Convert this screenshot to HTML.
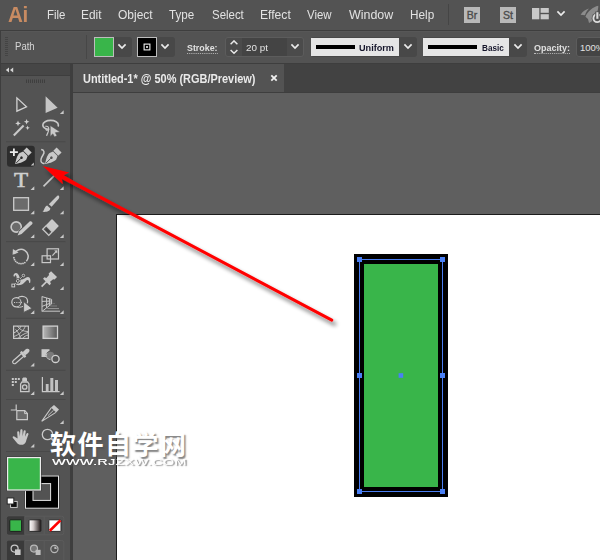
<!DOCTYPE html>
<html><head><meta charset="utf-8">
<style>
html,body{margin:0;padding:0;}
body{width:600px;height:560px;overflow:hidden;background:#3e3e3e;position:relative;font-family:"Liberation Sans","Noto Sans CJK SC",sans-serif;}
.abs{position:absolute;}
#menubar{left:0;top:0;width:600px;height:29.6px;background:#535353;}
#menubar span.m{position:absolute;top:8px;font-size:12.5px;color:#e2e2e2;line-height:15px;white-space:nowrap;transform:scaleX(0.915);transform-origin:0 50%;}
#ctrl{left:1px;top:31px;width:599px;height:32px;background:#535353;box-shadow:0 1px 0 #575757 inset;}
#ctrl .t{position:absolute;font-size:11px;line-height:13px;white-space:nowrap;transform:scaleX(0.91);transform-origin:0 50%;}
#tabbar{left:73px;top:64px;width:527px;height:28px;background:#424242;}
#tab{left:73px;top:64px;width:211px;height:28px;background:#535353;}
#canvas{left:73px;top:93px;width:527px;height:467px;background:#5f5f5f;}
#toolhead{left:1px;top:64px;width:69px;height:11px;background:#464646;}
#tools{left:1px;top:76px;width:69px;height:484px;background:#535353;}
#artb{left:116px;top:214px;width:484px;height:346px;background:#1c1c1c;}
#artw{left:117px;top:215px;width:483px;height:345px;background:#fff;}
.dd{position:absolute;background:#474747;border-radius:0 3px 3px 0;}
</style></head><body>
<div id="menubar" class="abs">
<span class="abs" style="left:8px;top:3px;font-size:21.5px;line-height:24px;color:#c88b62;font-weight:bold;letter-spacing:-0.5px;transform:scaleX(0.96);transform-origin:0 50%;">Ai</span>
<span class="m" style="left:47px">File</span>
<span class="m" style="left:81px;transform:scaleX(0.95)">Edit</span>
<span class="m" style="left:118px;transform:scaleX(0.96)">Object</span>
<span class="m" style="left:169px;transform:scaleX(0.93)">Type</span>
<span class="m" style="left:212px">Select</span>
<span class="m" style="left:260px;transform:scaleX(0.97)">Effect</span>
<span class="m" style="left:307px">View</span>
<span class="m" style="left:349px;transform:scaleX(0.995)">Window</span>
<span class="m" style="left:410px;transform:scaleX(0.94)">Help</span>
<div class="abs" style="left:448px;top:4px;width:1px;height:21px;background:#454545;"></div>
<div class="abs" style="left:464px;top:7px;width:16px;height:16px;background:#b9b9b9;"></div>
<span class="abs" style="left:464px;top:8px;width:16px;text-align:center;font-size:10.5px;line-height:14px;color:#4c4c4c;-webkit-text-stroke:0.35px #4c4c4c;">Br</span>
<div class="abs" style="left:500px;top:7px;width:16px;height:16px;background:#b9b9b9;"></div>
<span class="abs" style="left:500px;top:8px;width:16px;text-align:center;font-size:10.5px;line-height:14px;color:#4c4c4c;-webkit-text-stroke:0.35px #4c4c4c;">St</span>
<svg class="abs" style="left:532px;top:8px" width="17" height="12" viewBox="0 0 17 12"><rect x="0" y="0" width="7.3" height="11.3" fill="#c9c9c9"/><rect x="8.6" y="0" width="8.2" height="4.8" fill="#c9c9c9"/><rect x="8.6" y="6.2" width="8.2" height="5.1" fill="#c9c9c9"/></svg>
<svg class="abs" style="left:556px;top:10px" width="10" height="7" viewBox="0 0 10 7"><path d="M1.4 1.4 L5 5 L8.6 1.4" fill="none" stroke="#ebebeb" stroke-width="1.7"/></svg>
<svg class="abs" style="left:578px;top:2px" width="22" height="24" viewBox="578 2 22 24"><path d="M598.3 5.8 C593 7 587.5 11.5 585.4 16.8 L588 19 L589 23 L591.5 21.5 C596 17 598.3 11 598.3 5.8 Z" fill="#8c8c8c"/><path d="M589 8.6 C585.5 9.4 582.5 11.8 580.6 14.8 L585 15.2 C585.8 12.8 587.2 10.4 589 8.6 Z" fill="#8c8c8c"/><circle cx="597.3" cy="18.2" r="5.6" fill="#535353"/><circle cx="597.3" cy="18.2" r="3.9" fill="none" stroke="#dcdcdc" stroke-width="1.9"/><rect x="595.2" y="11.5" width="4.2" height="7.6" fill="#535353"/><rect x="596.3" y="12.2" width="2.1" height="6.6" fill="#dcdcdc"/></svg>
</div>
<div id="ctrl" class="abs">
<!-- grip -->
<div class="abs" style="left:4px;top:6px;width:3px;height:19px;background:repeating-linear-gradient(to bottom,#444 0,#444 1px,#535353 1px,#535353 2px);"></div>
<span class="t" style="left:14px;top:8.8px;color:#d6d6d6;font-size:10.3px;transform:scaleX(0.93);">Path</span>
<div class="abs" style="left:85px;top:4px;width:1px;height:24px;background:#474747;"></div>
<!-- fill -->
<div class="abs" style="left:93px;top:6px;width:38px;height:20px;background:#484848;border-radius:3px;"></div>
<div class="abs" style="left:93px;top:6px;width:18px;height:18px;background:#39b54a;border:1px solid #bdbdbd;"></div>
<svg class="abs" style="left:116px;top:12px" width="10" height="7" viewBox="0 0 10 7"><path d="M1.4 1.4 L5 5 L8.6 1.4" fill="none" stroke="#ebebeb" stroke-width="1.7"/></svg>
<!-- stroke -->
<div class="abs" style="left:136px;top:6px;width:38px;height:20px;background:#484848;border-radius:3px;"></div>
<div class="abs" style="left:136px;top:6px;width:18px;height:18px;background:#000;border:1px solid #bdbdbd;"></div>
<svg class="abs" style="left:142px;top:12px" width="8" height="8" viewBox="0 0 8 8"><rect x="1.1" y="1.1" width="5.8" height="5.8" fill="none" stroke="#f0f0f0" stroke-width="1.1"/><rect x="3.1" y="3.1" width="1.8" height="1.8" fill="#f0f0f0"/></svg>
<svg class="abs" style="left:159px;top:12px" width="10" height="7" viewBox="0 0 10 7"><path d="M1.4 1.4 L5 5 L8.6 1.4" fill="none" stroke="#ebebeb" stroke-width="1.7"/></svg>
<span class="t" style="left:186px;top:10.7px;color:#e0e0e0;font-weight:bold;border-bottom:1px dotted #bbb;font-size:9.5px;transform:scaleX(0.932);line-height:11.5px;">Stroke:</span>
<!-- stepper group -->
<div class="abs" style="left:224px;top:6px;width:79px;height:20px;background:#4b4b4b;border-radius:3px;box-shadow:0 0 0 1px #5c5c5c inset;"></div>
<div class="abs" style="left:241px;top:7px;width:45px;height:18px;background:#444;"></div>
<svg class="abs" style="left:228px;top:9px" width="10" height="15" viewBox="0 0 10 15"><path d="M1.6 4.2 L5 0.9 L8.4 4.2 M1.6 10 L5 13.3 L8.4 10" fill="none" stroke="#e8e8e8" stroke-width="1.5"/></svg>
<span class="t" style="left:245px;top:9.9px;color:#e2e2e2;font-size:9.5px;transform:scaleX(1.040);">20 pt</span>
<svg class="abs" style="left:289px;top:12px" width="10" height="7" viewBox="0 0 10 7"><path d="M1.4 1.4 L5 5 L8.6 1.4" fill="none" stroke="#ebebeb" stroke-width="1.7"/></svg>
<!-- uniform -->
<div class="abs" style="left:310px;top:6px;width:106px;height:20px;background:#484848;border-radius:3px;"></div>
<div class="abs" style="left:310px;top:7px;width:88px;height:18px;background:#e6e6e6;"></div>
<div class="abs" style="left:315px;top:14.4px;width:39px;height:3.3px;background:#000;"></div>
<span class="t" style="left:358px;top:9.9px;color:#15152a;font-weight:bold;font-size:9.5px;transform:scaleX(0.960);">Uniform</span>
<svg class="abs" style="left:402px;top:12px" width="10" height="7" viewBox="0 0 10 7"><path d="M1.4 1.4 L5 5 L8.6 1.4" fill="none" stroke="#ebebeb" stroke-width="1.7"/></svg>
<!-- basic -->
<div class="abs" style="left:422px;top:6px;width:104px;height:20px;background:#484848;border-radius:3px;"></div>
<div class="abs" style="left:422px;top:7px;width:86px;height:18px;background:#e6e6e6;"></div>
<div class="abs" style="left:427px;top:14.4px;width:49px;height:3.3px;background:#000;"></div>
<span class="t" style="left:481px;top:9.9px;color:#15152a;font-weight:bold;font-size:9.5px;transform:scaleX(0.857);">Basic</span>
<svg class="abs" style="left:512px;top:12px" width="10" height="7" viewBox="0 0 10 7"><path d="M1.4 1.4 L5 5 L8.6 1.4" fill="none" stroke="#ebebeb" stroke-width="1.7"/></svg>
<span class="t" style="left:533px;top:10.7px;color:#e0e0e0;font-weight:bold;border-bottom:1px dotted #bbb;font-size:9.5px;transform:scaleX(0.947);line-height:11.5px;">Opacity:</span>
<div class="abs" style="left:575px;top:6px;width:30px;height:20px;background:#444;border-radius:3px;box-shadow:0 0 0 1px #5c5c5c inset;"></div>
<span class="t" style="left:579px;top:9.9px;color:#e2e2e2;;font-size:9.5px;transform:scaleX(1.0);">100%</span>
</div>
<div id="tabbar" class="abs"></div>
<div id="tab" class="abs"><span class="abs" style="left:10px;top:7.6px;font-size:12px;line-height:14px;font-weight:bold;color:#eaeaea;white-space:nowrap;transform-origin:0 50%;transform:scaleX(0.912);" id="tabt">Untitled-1* @ 50% (RGB/Preview)</span>
<svg class="abs" style="left:197.3px;top:10px" width="8" height="8" viewBox="0 0 8 8"><path d="M1.3 1.3 L6.7 6.7 M6.7 1.3 L1.3 6.7" stroke="#f0f0f0" stroke-width="1.8" fill="none"/></svg></div>
<div id="canvas" class="abs"></div>
<div id="toolhead" class="abs"></div>
<div id="tools" class="abs"></div>
<svg class="abs" id="toolsvg" style="left:0;top:0" width="72" height="560" viewBox="0 0 72 560">
<defs>
<linearGradient id="gr1" x1="0" x2="1" y1="0" y2="0"><stop offset="0" stop-color="#b8b8b8"/><stop offset="1" stop-color="#585858"/></linearGradient>
<linearGradient id="gr2" x1="0" x2="1" y1="0" y2="0"><stop offset="0" stop-color="#ffffff"/><stop offset="0.35" stop-color="#d8d0d0"/><stop offset="1" stop-color="#1a1212"/></linearGradient>
</defs>
<!-- header chevrons -->
<path d="M5.8 70 L9 67.5 L9 72.5 Z M10 70 L13.2 67.5 L13.2 72.5 Z" fill="#d4d4d4"/>
<!-- grip -->
<g fill="#3f3f3f"><rect x="26" y="79.5" width="1" height="3.5"/><rect x="28" y="79.5" width="1" height="3.5"/><rect x="30" y="79.5" width="1" height="3.5"/><rect x="32" y="79.5" width="1" height="3.5"/><rect x="34" y="79.5" width="1" height="3.5"/><rect x="36" y="79.5" width="1" height="3.5"/><rect x="38" y="79.5" width="1" height="3.5"/><rect x="40" y="79.5" width="1" height="3.5"/><rect x="42" y="79.5" width="1" height="3.5"/><rect x="44" y="79.5" width="1" height="3.5"/></g>
<!-- separators -->
<g fill="#494949"><rect x="6" y="141.3" width="59.5" height="1"/><rect x="6" y="241.1" width="59.5" height="1"/><rect x="6" y="317.8" width="59.5" height="1"/><rect x="6" y="369.8" width="59.5" height="1"/><rect x="6" y="399" width="59.5" height="1"/><rect x="6" y="451" width="59.5" height="1"/></g>
<!-- corner triangles -->
<path transform="translate(60.2 110.6)" d="M3.5 -0.4 L3.5 3.4 L-0.3 3.4 Z" fill="#c9c9c9"/>
<path transform="translate(30.8 186.6)" d="M3.5 -0.4 L3.5 3.4 L-0.3 3.4 Z" fill="#c9c9c9"/><path transform="translate(60.2 186.6)" d="M3.5 -0.4 L3.5 3.4 L-0.3 3.4 Z" fill="#c9c9c9"/>
<path transform="translate(30.8 210.8)" d="M3.5 -0.4 L3.5 3.4 L-0.3 3.4 Z" fill="#c9c9c9"/><path transform="translate(60.2 210.8)" d="M3.5 -0.4 L3.5 3.4 L-0.3 3.4 Z" fill="#c9c9c9"/>
<path transform="translate(30.8 234.6)" d="M3.5 -0.4 L3.5 3.4 L-0.3 3.4 Z" fill="#c9c9c9"/><path transform="translate(60.2 234.6)" d="M3.5 -0.4 L3.5 3.4 L-0.3 3.4 Z" fill="#c9c9c9"/>
<path transform="translate(30.8 262.6)" d="M3.5 -0.4 L3.5 3.4 L-0.3 3.4 Z" fill="#c9c9c9"/><path transform="translate(60.2 262.6)" d="M3.5 -0.4 L3.5 3.4 L-0.3 3.4 Z" fill="#c9c9c9"/>
<path transform="translate(30.8 286.6)" d="M3.5 -0.4 L3.5 3.4 L-0.3 3.4 Z" fill="#c9c9c9"/><path transform="translate(60.2 286.6)" d="M3.5 -0.4 L3.5 3.4 L-0.3 3.4 Z" fill="#c9c9c9"/>
<path transform="translate(30.8 310.6)" d="M3.5 -0.4 L3.5 3.4 L-0.3 3.4 Z" fill="#c9c9c9"/><path transform="translate(60.2 310.6)" d="M3.5 -0.4 L3.5 3.4 L-0.3 3.4 Z" fill="#c9c9c9"/>
<path transform="translate(30.8 363.2)" d="M3.5 -0.4 L3.5 3.4 L-0.3 3.4 Z" fill="#c9c9c9"/>
<path transform="translate(30.8 391.6)" d="M3.5 -0.4 L3.5 3.4 L-0.3 3.4 Z" fill="#c9c9c9"/><path transform="translate(60.2 391.6)" d="M3.5 -0.4 L3.5 3.4 L-0.3 3.4 Z" fill="#c9c9c9"/>
<path transform="translate(60.2 420.6)" d="M3.5 -0.4 L3.5 3.4 L-0.3 3.4 Z" fill="#c9c9c9"/>
<path transform="translate(30.8 444.2)" d="M3.5 -0.4 L3.5 3.4 L-0.3 3.4 Z" fill="#c9c9c9"/>
<!-- row1: selection / direct selection -->
<path d="M16.9 97.9 L16.9 111.2 L26.5 106.9 Z" fill="none" stroke="#d2d2d2" stroke-width="1.3" stroke-linejoin="miter"/>
<path d="M45.6 96.2 L45.6 113 L57.6 107.7 Z" fill="#c6c6c6"/>
<!-- row2: magic wand / lasso -->
<path d="M13.8 135.4 L23.6 125.6" stroke="#c9c9c9" stroke-width="2.1" fill="none"/>
<g fill="#d0d0d0"><path transform="translate(18 123.4)" d="M0 -2.8 L0.8 -0.8 L2.8 0 L0.8 0.8 L0 2.8 L-0.8 0.8 L-2.8 0 L-0.8 -0.8 Z"/><path transform="translate(26.6 121.8)" d="M0 -2.8 L0.8 -0.8 L2.8 0 L0.8 0.8 L0 2.8 L-0.8 0.8 L-2.8 0 L-0.8 -0.8 Z"/><path transform="translate(27.6 127.8) scale(0.8)" d="M0 -2.8 L0.8 -0.8 L2.8 0 L0.8 0.8 L0 2.8 L-0.8 0.8 L-2.8 0 L-0.8 -0.8 Z"/></g>
<path d="M49.5 129.5 C45.5 129 42.8 127.2 42.8 125 C42.8 122.3 46.3 120.4 50.6 120.4 C55 120.4 58.4 122.3 58.4 125 C58.4 125.6 58.2 126.2 57.9 126.6" fill="none" stroke="#c9c9c9" stroke-width="1.6"/>
<path d="M45.4 126.4 C47.6 125.8 49.4 127.4 48.4 129.2 C47.6 130.6 45.8 130.4 46 129 M48.4 129.2 C49.2 131.4 47.2 133.4 46.6 135.8" fill="none" stroke="#c9c9c9" stroke-width="1.2"/>
<path d="M50.2 125.4 L50.2 136.4 L52.8 133.9 L54.5 137 L57 135.7 L55.4 132.7 L60.2 132 Z" fill="#c9c9c9" stroke="#535353" stroke-width="0.6"/>
<!-- row3: pen+ (selected) / curvature -->
<rect x="7" y="145.7" width="27.8" height="21" rx="3" fill="#2d2d2d"/>
<path d="M9.9 152.1 H17.9 M13.9 148.4 V155.9" stroke="#ececec" stroke-width="1.8" fill="none"/>
<g transform="translate(15.2 164) rotate(-45)" fill="#c9c9c9"><path d="M0 0 C2.6 -1.8 7 -4.9 11 -4.7 L14.4 -3.2 L14.4 3.2 L11 4.7 C7 4.9 2.6 1.8 0 0 Z"/><rect x="15.1" y="-3.5" width="4.7" height="7"/><path d="M1.5 0 H8" stroke="#2d2d2d" stroke-width="0.9"/><circle cx="8.9" cy="0" r="1.3" fill="#2d2d2d"/></g>
<path d="M31 163 L34 163 L34 160 Z" fill="#c9c9c9" transform="translate(-0.2 2.6)"/>
<g transform="translate(45.1 164) rotate(-45)" fill="#c9c9c9"><path d="M0 0 C2.6 -1.8 7 -4.9 11 -4.7 L14.4 -3.2 L14.4 3.2 L11 4.7 C7 4.9 2.6 1.8 0 0 Z"/><rect x="15.1" y="-3.5" width="4.7" height="7"/><path d="M1.5 0 H8" stroke="#535353" stroke-width="0.9"/><circle cx="8.9" cy="0" r="1.3" fill="#535353"/></g>
<path d="M41.2 149.6 C44.5 150 44.6 152.6 43 155 C41.2 157.8 40 160.6 41.6 162.4 C42.4 163.4 43.6 163.6 44.6 163.2" fill="none" stroke="#c9c9c9" stroke-width="1.5"/>
<!-- row4: type / line -->
<text x="21" y="187" font-family="Liberation Serif, serif" font-size="20.5" fill="#cfcfcf" stroke="#cfcfcf" stroke-width="0.55" text-anchor="middle" transform="translate(21 0) scale(1.13 1) translate(-21 0)">T</text>
<path d="M43.5 186.4 L57 172.9" stroke="#c9c9c9" stroke-width="1.6" fill="none"/>
<!-- row5: rect / brush -->
<rect x="13.7" y="197.7" width="14.8" height="12.6" fill="#6b6b6b" stroke="#cbcbcb" stroke-width="1.3"/>
<path d="M58.6 195.5 C59.7 196.5 59.3 198 58.5 199 L51.6 206.8 L48.8 204.2 L56.5 196.5 C57.1 195.9 58 195.1 58.6 195.5 Z" fill="#c9c9c9"/>
<path d="M47.2 205.6 L50.4 208.6 C50 211.6 46 212.2 42.4 211.8 C44.6 210.6 44.2 206.8 47.2 205.6 Z" fill="#c9c9c9"/>

<!-- row6: shaper / eraser -->
<circle cx="16.2" cy="227" r="5.1" fill="#6b6b6b" stroke="#c9c9c9" stroke-width="1.6"/>
<path d="M17.4 235.6 L18.6 230.8 L29.4 220.6 L33 224.2 L22.2 234.6 Z" fill="#535353"/>
<path d="M17.6 235.4 L19.2 231.4 L29.6 221.6 C30.4 220.9 31.4 221.2 32 221.9 C32.6 222.6 32.8 223.5 32 224.3 L21.6 233.9 Z" fill="#c9c9c9"/>
<g transform="translate(52 219) rotate(45)"><rect x="0" y="0" width="9.9" height="8.8" rx="0.8" fill="#c9c9c9"/><rect x="0.65" y="8.8" width="8.6" height="5" fill="#535353" stroke="#c9c9c9" stroke-width="1.3"/><rect x="2.6" y="10.5" width="4.7" height="1.7" fill="#404040"/></g>
<!-- row7: rotate / scale -->
<path d="M14.23 254.04 A7.2 7.2 0 1 1 26.35 261.32" fill="none" stroke="#c9c9c9" stroke-width="1.5"/><g fill="#c9c9c9"><circle cx="24.82" cy="262.61" r="0.9"/><circle cx="22.98" cy="263.42" r="0.9"/><circle cx="21.00" cy="263.70" r="0.9"/><circle cx="19.02" cy="263.42" r="0.9"/><circle cx="17.18" cy="262.61" r="0.9"/><circle cx="15.65" cy="261.32" r="0.9"/><circle cx="14.53" cy="259.66" r="0.9"/><circle cx="13.91" cy="257.75" r="0.9"/></g><path d="M12.6 254.8 L12.9 248.9 L18.6 252.4 Z" fill="#c9c9c9"/>
<rect x="47.1" y="248.8" width="11.4" height="10.2" fill="none" stroke="#c9c9c9" stroke-width="1.2"/>
<rect x="42.1" y="255.8" width="8.4" height="6.8" fill="#535353" fill-opacity="0.0" stroke="#c9c9c9" stroke-width="1.2"/>
<path d="M52.4 255.6 L56 251.6" stroke="#c9c9c9" stroke-width="1.2" fill="none"/>
<path d="M54.2 250.4 L57.4 250.2 L57.2 253.4 Z" fill="#c9c9c9"/>
<!-- row8: width / pin -->
<path d="M16 284.4 C14.6 283.2 15.7 281.6 16.2 280 C16.7 278.4 16.9 276.4 15.9 275.5 C15.2 275 14.8 275.8 14.7 276.7 L13.5 276.3 C13.3 274.5 14.4 273.2 16 273.1 C17.6 273.1 18.6 274.6 19.2 276.2 C19.8 277.8 20.1 279.3 21.2 279.5 C22.8 279.8 24.6 278.6 26 277.6 C27.4 276.6 29 276.8 29.8 278 C30.7 279.4 30.5 281.6 30.1 282.9 L29.1 282.7 C29.1 281.2 28.6 280 27.6 280 C26.2 280 25.4 282 23.4 283.6 C21.4 285.2 17.6 285.7 16 284.4 Z" fill="#c9c9c9"/>
<path d="M13.4 285.4 L23.4 275.5" stroke="#4a4a4a" stroke-width="1.8" fill="none"/>
<path d="M13.4 285.4 L23.4 275.5" stroke="#d4d4d4" stroke-width="0.8" fill="none"/>
<rect x="11.9" y="284.1" width="2.8" height="2.8" fill="#4a4a4a" stroke="#d8d8d8" stroke-width="0.9"/>
<circle cx="17.8" cy="280.9" r="1.6" fill="#4a4a4a" stroke="#444" stroke-width="2"/><circle cx="17.8" cy="280.9" r="1.5" fill="#4a4a4a" stroke="#dcdcdc" stroke-width="0.8"/>
<circle cx="23.4" cy="275.5" r="1.4" fill="#4a4a4a" stroke="#4a4a4a" stroke-width="1.8"/><circle cx="23.4" cy="275.5" r="1.3" fill="#4a4a4a" stroke="#dcdcdc" stroke-width="0.8"/>
<g transform="translate(41.6 286.6) rotate(-45)" fill="#c9c9c9"><rect x="0" y="-0.8" width="7" height="1.6"/><path d="M6.6 -4.6 L8.6 -4.6 L9.4 -2.6 L13.4 -2.9 L14.2 -4.2 L17.6 -4.2 L17.6 4.2 L14.2 4.2 L13.4 2.9 L9.4 2.6 L8.6 4.6 L6.6 4.6 Z"/></g>
<!-- row9: shape builder / perspective -->
<path d="M16.4 306.9 C13.6 306.9 11.8 304.9 11.8 302.3 C11.8 299.7 13.8 297.7 16.4 297.7 C17 297.7 17.4 297.8 17.8 297.9 C18.8 296.9 20.2 296.3 22 296.3 C25.2 296.3 27.6 298.5 27.6 301.3 C27.6 302 27.5 302.6 27.2 303.2" fill="none" stroke="#c9c9c9" stroke-width="1.2"/>
<path d="M16.4 306.9 C19 306.9 21 304.9 21 302.3 C21 300.3 19.8 298.5 17.8 297.9 M16.4 306.9 C18 307.6 20.6 307.4 23 306.4" fill="none" stroke="#c9c9c9" stroke-width="1"/>
<path d="M14 302.5 H23" stroke="#c9c9c9" stroke-width="1.1" stroke-dasharray="1.1 1.2" fill="none"/>
<path d="M23.6 301.6 L23.6 312.4 L32 308.4 Z" fill="#c9c9c9" stroke="#535353" stroke-width="0.8"/>
<g fill="none" stroke="#c9c9c9" stroke-width="1"><path d="M42 296.4 V311.6 M42 296.6 L51.6 299.4 V304 L42 311.4 M46.6 298 V307.8 M49.4 298.8 V305.6 M42 301.4 L51.6 301 M42 306.4 L51.6 302.6"/></g>
<path d="M52.4 303.6 H55" stroke="#6e6e6e" stroke-width="1"/><path d="M50.4 306 H57" stroke="#7e7e7e" stroke-width="1"/><path d="M47.4 308.6 H59" stroke="#999" stroke-width="1"/><path d="M42.4 311.2 H60" stroke="#bdbdbd" stroke-width="1.1"/>
<!-- row10: mesh / gradient -->
<rect x="13.6" y="326.1" width="14.8" height="12.3" fill="none" stroke="#c9c9c9" stroke-width="1.2"/>
<g fill="none" stroke="#c9c9c9" stroke-width="0.9"><path d="M13.6 333 C17 331.6 19.6 329.2 21 326 M13.6 336.6 C19.4 334.6 23.6 331 25.4 326 M18 338.4 C21 335.6 24.6 333.2 28.4 332.4 M22.6 338.4 C24 336.6 26 335.4 28.4 335 M17.4 326 C19.6 329.6 23 331.4 28.4 331.6 M15.6 329.4 C18.4 332.6 20 335 20.4 338.4"/></g>
<rect x="43.1" y="326.1" width="14.4" height="12.3" fill="url(#gr1)" stroke="#d0d0d0" stroke-width="1.3"/>
<!-- row11: eyedropper / blend -->
<g transform="translate(12.6 363.6) rotate(-41)"><path d="M0.6 0 C0.6 -1 1.6 -1.8 2.6 -1.8 L13.4 -1.8 L13.4 1.8 L2.6 1.8 C1.6 1.8 0.6 1 0.6 0 Z" fill="#535353" stroke="#c9c9c9" stroke-width="1.2"/><rect x="12.8" y="-3.6" width="2.4" height="7.2" rx="0.6" fill="#c9c9c9"/><path d="M15 -2 L18 -2.2 C20.4 -2.4 21.8 -1.4 21.8 0 C21.8 1.4 20.4 2.4 18 2.2 L15 2 Z" fill="#c9c9c9"/></g>
<rect x="41.5" y="349.2" width="8" height="7.8" fill="#c9c9c9"/>
<circle cx="50.5" cy="355.4" r="4.2" fill="#7a7a7a" stroke="#535353" stroke-width="1"/>
<path d="M47 353.2 A4.2 4.2 0 0 0 50.5 359.6" fill="none" stroke="#c9c9c9" stroke-width="1"/>
<circle cx="55.5" cy="358.9" r="3.6" fill="#535353" stroke="#d0d0d0" stroke-width="1.3"/>

<!-- row12: sprayer / graph -->
<g fill="#c9c9c9"><rect x="11.8" y="378" width="2" height="2"/><rect x="14.8" y="378" width="2" height="2"/><rect x="17.8" y="378" width="2" height="2"/><rect x="11.8" y="381" width="2" height="2"/><rect x="14.8" y="381" width="2" height="2"/><rect x="11.8" y="384" width="2" height="2"/></g>
<path d="M22.2 381.6 L22.2 378.4 L23.4 377.4 L26 377.4 L27 378.4 L27 381.6 Z" fill="#c9c9c9"/>
<path d="M20.6 384 L22 382 L27.6 382 L29 384 L29 391.6 L20.6 391.6 Z" fill="none" stroke="#c9c9c9" stroke-width="1.3"/>
<circle cx="24.7" cy="387" r="2.2" fill="none" stroke="#c9c9c9" stroke-width="1.3"/>
<path d="M42.4 377 V391.6 H59.6" fill="none" stroke="#c9c9c9" stroke-width="1.2"/>
<g fill="#c0c0c0"><rect x="45.8" y="384" width="2.8" height="7.2"/><rect x="50.3" y="378" width="3" height="13.2"/><rect x="55" y="380" width="3" height="11.2"/></g>
<!-- row13: artboard / slice -->
<path d="M10.8 410 H17 M16.2 404.5 V410" stroke="#c9c9c9" stroke-width="1.2" fill="none"/>
<path d="M16.8 410.6 H24.8 L27.4 413.4 V419.6 H16.8 Z" fill="#6b6b6b" stroke="#c9c9c9" stroke-width="1.2"/>
<path d="M24.6 410.6 V413.6 H27.4" fill="none" stroke="#c9c9c9" stroke-width="1"/>
<path d="M51 407.4 L54 405 L59 409.6 L56.2 412.6 Z" fill="#c9c9c9"/>
<path d="M51.3 407.8 L41.7 421.4 L55.9 412.4" fill="none" stroke="#c9c9c9" stroke-width="1.1" stroke-linejoin="miter"/><path d="M53.6 410.2 L48 415.6" fill="none" stroke="#c9c9c9" stroke-width="0.9"/>
<!-- row14: hand / zoom -->
<path d="M17.6 438.6 L17.2 432.4 C17.1 431 19.1 430.8 19.3 432.2 L19.9 436.4 L20.3 430.4 C20.4 429 22.5 429 22.5 430.4 L22.6 436.2 L23.6 431.2 C23.9 429.8 25.9 430.2 25.7 431.6 L25 436.8 L26.6 433.6 C27.2 432.4 29 433.2 28.4 434.6 C27.4 437.2 26.8 439 26 441.4 C25.2 443.8 23.6 444.8 21.4 444.8 C19.2 444.8 17.8 444 16.4 442.2 L12.9 437.9 C12.1 436.9 13.3 435.8 14.3 436.5 Z" fill="#c9c9c9"/>
<circle cx="47.5" cy="434.5" r="5.2" fill="none" stroke="#c9c9c9" stroke-width="1.3"/>
<path d="M51.4 438.4 L55 442" stroke="#c9c9c9" stroke-width="2" fill="none"/>
<!-- fill / stroke -->
<rect x="24.5" y="475" width="35" height="34.2" fill="#3a3a3a"/>
<rect x="25.5" y="476" width="33" height="32.2" fill="#000" stroke="#e4e4e4" stroke-width="1"/>
<rect x="33" y="483.6" width="17.6" height="16.8" fill="#535353" stroke="#e4e4e4" stroke-width="1"/>
<rect x="6.5" y="456.5" width="35" height="34.6" fill="#3a3a3a"/>
<rect x="7.6" y="457.6" width="32.8" height="32.4" fill="#39b54a" stroke="#ececec" stroke-width="1.2"/>
<!-- default fill/stroke mini -->
<rect x="10.6" y="501.4" width="6.6" height="6" fill="#111" stroke="#d8d8d8" stroke-width="0.9"/>
<rect x="7.2" y="498" width="6.6" height="6" fill="#fff" stroke="#222" stroke-width="0.9"/>
<!-- color mode row -->
<rect x="6.8" y="516.2" width="57" height="18.6" rx="2" fill="#535353" stroke="#5c5c5c" stroke-width="1"/>
<path d="M8.8 516.2 H24.8 V534.8 H8.8 C7.7 534.8 6.8 533.9 6.8 532.8 V518.2 C6.8 517.1 7.7 516.2 8.8 516.2 Z" fill="#3a3a3a"/>
<path d="M24.8 516.2 V534.8 M44.2 516.2 V534.8" stroke="#5c5c5c" stroke-width="1"/>
<rect x="9.8" y="519.8" width="11.8" height="11.6" rx="0.8" fill="#39b54a" stroke="#1e1e1e" stroke-width="1"/>
<rect x="29" y="519.8" width="12" height="11.6" rx="0.8" fill="url(#gr2)" stroke="#2a2a2a" stroke-width="1"/>
<rect x="48.8" y="519.8" width="12.2" height="11.6" rx="0.8" fill="#fff" stroke="#2a2a2a" stroke-width="1"/>
<path d="M49.8 530.8 L60.4 520.4" stroke="#ff0000" stroke-width="2.6" fill="none"/>
<!-- draw mode row -->
<rect x="6.8" y="540.6" width="57" height="22" rx="2" fill="#535353" stroke="#5c5c5c" stroke-width="1"/>
<path d="M8.8 540.6 H24.8 V562 H6.8 V542.6 C6.8 541.5 7.7 540.6 8.8 540.6 Z" fill="#3a3a3a"/>
<path d="M24.8 540.6 V560 M44.2 540.6 V560" stroke="#5c5c5c" stroke-width="1"/>
<circle cx="14.6" cy="548.6" r="3.5" fill="none" stroke="#c9c9c9" stroke-width="1.2"/><rect x="15" y="549.4" width="5.6" height="5.6" fill="#c9c9c9"/>
<circle cx="34" cy="548.6" r="3.5" fill="#777" stroke="#b8b8b8" stroke-width="1.2"/><rect x="35.6" y="549.8" width="5" height="5.2" fill="#c0c0c0"/>
<circle cx="54.4" cy="549" r="3.6" fill="none" stroke="#b8b8b8" stroke-width="1.2"/><path d="M54.4 549 L54.4 546.6 A2.4 2.4 0 0 1 56.8 549 Z" fill="#b8b8b8"/>
</svg>
<div id="artb" class="abs"></div>
<div id="artw" class="abs"></div>
<div class="abs" style="left:354px;top:254px;width:94px;height:243px;background:#000;"></div>
<div class="abs" style="left:364px;top:264px;width:74px;height:223px;background:#39b54a;"></div>
<svg class="abs" style="left:350px;top:250px" width="104" height="252" viewBox="350 250 104 252">
<rect x="359.5" y="259.5" width="83" height="232" fill="none" stroke="#4a7df0" stroke-width="1"/>
<g fill="#4a80f5"><rect x="357" y="257" width="5" height="5"/><rect x="440" y="257" width="5" height="5"/><rect x="357" y="489" width="5" height="5"/><rect x="440" y="489" width="5" height="5"/><rect x="357" y="373" width="5" height="5"/><rect x="440" y="373" width="5" height="5"/><rect x="398.6" y="373.2" width="4.6" height="4.6"/></g>
</svg>
<svg class="abs" style="left:0;top:0" width="600" height="560" viewBox="0 0 600 560"><defs><filter id="sh" x="-5%" y="-5%" width="110%" height="115%"><feGaussianBlur in="SourceAlpha" stdDeviation="2.2"/><feOffset dx="2.5" dy="3.5"/><feComponentTransfer><feFuncA type="linear" slope="0.55"/></feComponentTransfer><feMerge><feMergeNode/><feMergeNode in="SourceGraphic"/></feMerge></filter></defs><path d="M42.7 165.9 L69.2 172.5 L63.7 175.3 L87.4 188.4 L158.0 226.0 L332.5 318.8 A1.45 1.45 0 0 1 331.1 321.4 L156.6 228.7 L85.8 191.4 L61.8 179.0 L62.9 184.3 Z" fill="#ff0000" filter="url(#sh)"/></svg>
<div class="abs" id="wm1" style="left:50px;top:428px;font-family:'Liberation Sans','Noto Sans CJK SC',sans-serif;font-weight:bold;font-size:26px;line-height:34px;color:#fff;white-space:nowrap;text-shadow:1.5px 1.5px 1.5px rgba(80,80,80,0.7);letter-spacing:1.5px;">软件自学网</div>
<div class="abs" id="wm2" style="left:52px;top:456px;font-weight:normal;font-size:9.5px;line-height:12px;color:#fff;white-space:nowrap;text-shadow:1px 1px 1px rgba(80,80,80,0.75), 0.3px 0 0 #fff;transform-origin:0 50%;transform:scaleX(1.5);letter-spacing:0.3px;">WWW.RJZXW.COM</div>
</body></html>
